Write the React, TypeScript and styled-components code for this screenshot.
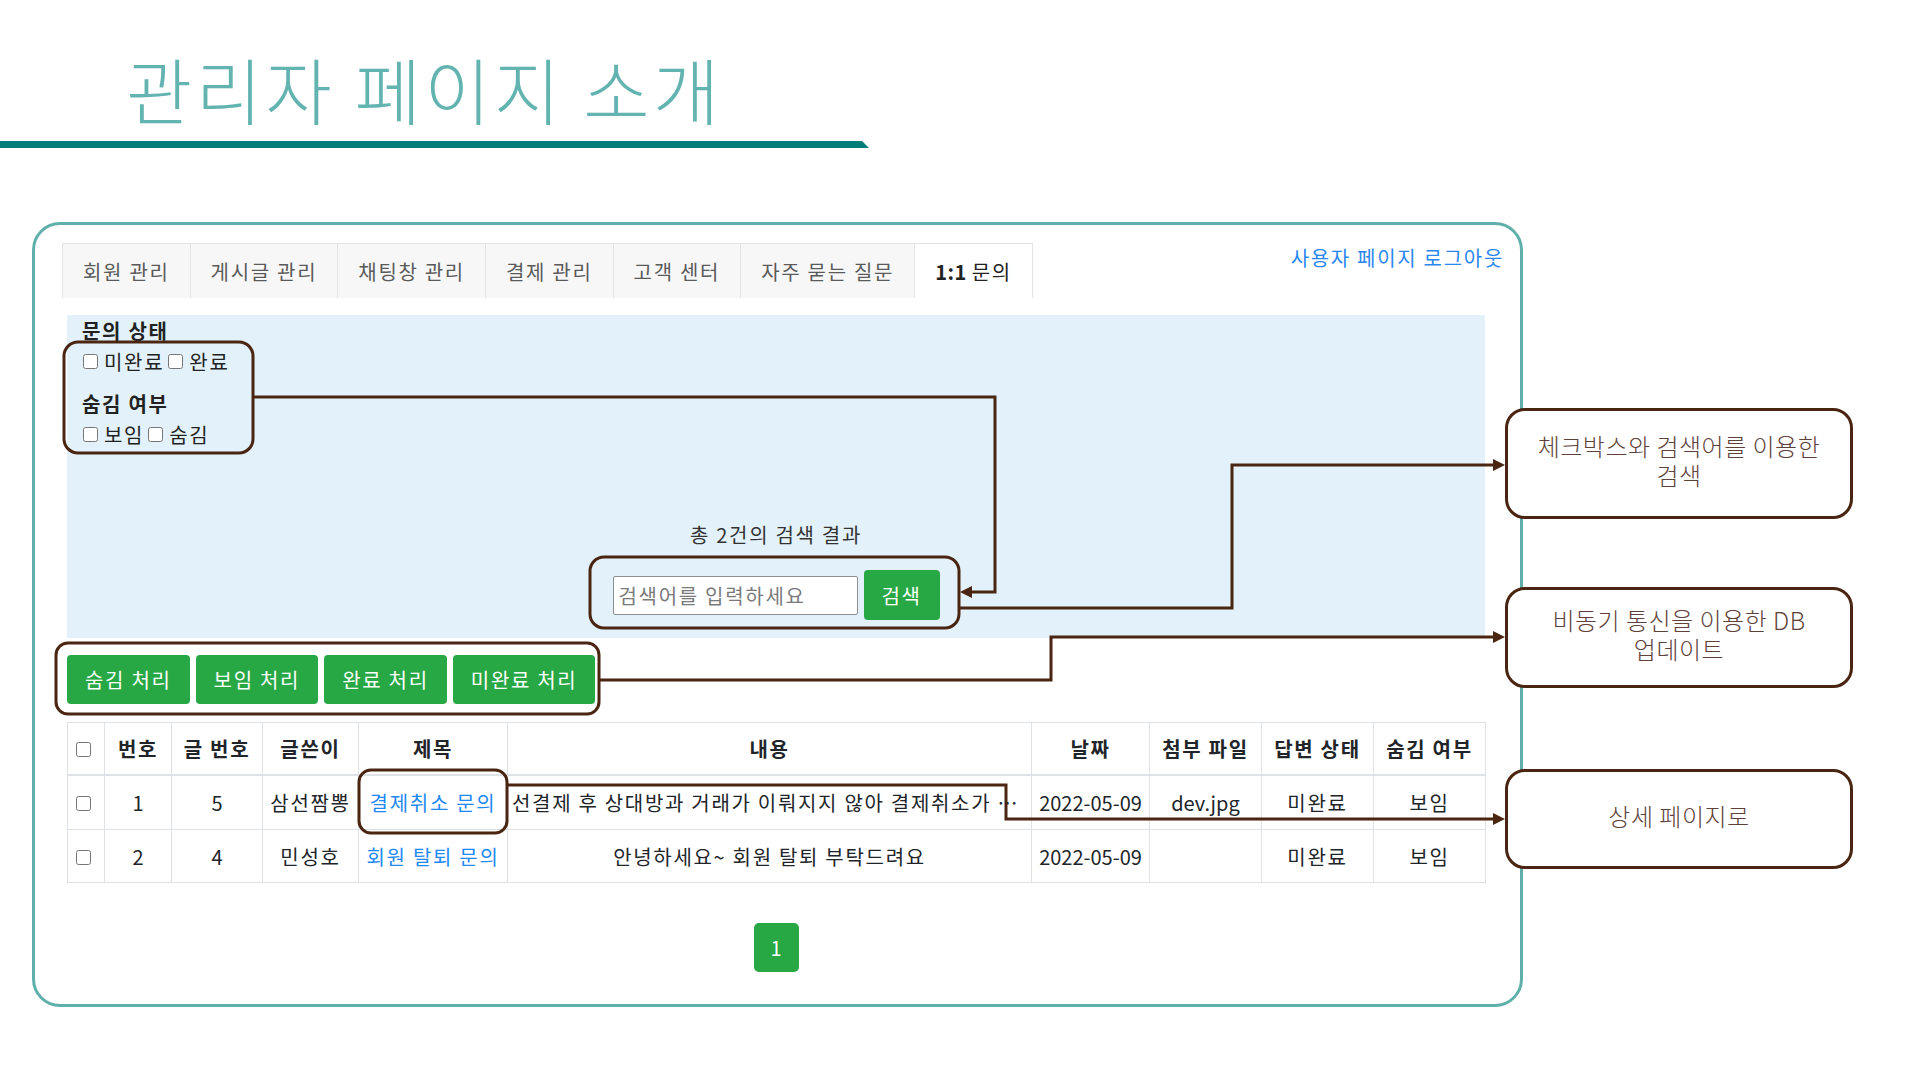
import React from "react";
import styled, { createGlobalStyle } from "styled-components";

const BROWN = "#4a2511";
const GREEN = "#28a745";

const GlobalStyle = createGlobalStyle`
  html, body { margin: 0; padding: 0; background: #fff; }
  body {
    font-family: "Noto Sans CJK KR", "Noto Sans", sans-serif;
    color: #212529;
    letter-spacing: 1.7px;
  }
  * { box-sizing: border-box; }
`;

const Slide = styled.div`
  position: relative;
  width: 1920px;
  height: 1080px;
  overflow: hidden;
  background: #fff;
`;

const Header = styled.header`
  display: flex;
  flex-direction: column;
`;

const Title = styled.h1`
  margin: 0;
  padding: 52px 0 0 126px;
  font-size: 72px;
  line-height: 72px;
  font-weight: 200;
  color: #63b4b0;
  letter-spacing: 3.5px;
`;

const TitleBar = styled.div`
  margin-top: 17px;
  width: 869px;
  height: 7px;
  background: #017e7a;
  clip-path: polygon(0 0, calc(100% - 7px) 0, 100% 100%, 0 100%);
`;

const Card = styled.section`
  margin: 74px 0 0 32px;
  width: 1491px;
  border: 3px solid #5fb0ab;
  border-radius: 28px;
  padding: 18px 35px 32px 32px;
`;

const TopRow = styled.div`
  display: flex;
  justify-content: space-between;
  align-items: flex-start;
  margin: 0 -19px 0 -4px;
`;

const Tabs = styled.nav`
  display: flex;
`;

const Tab = styled.div<{ $active?: boolean }>`
  height: 55px;
  padding: 0 20px;
  display: flex;
  align-items: center;
  font-size: 20px;
  color: ${(p) => (p.$active ? "#222" : "#5a5a5a")};
  background: ${(p) => (p.$active ? "#fff" : "#f7f7f7")};
  border: 1px solid #e4e4e4;
  border-bottom: none;
  margin-left: -1px;
  white-space: nowrap;
  b { font-weight: 700; margin-right: 5px; letter-spacing: 0.5px; }
`;

const LogoutLink = styled.a`
  font-size: 20px;
  line-height: 30px;
  color: #2b87f0;
  text-decoration: none;
`;

const FilterPanel = styled.div`
  margin-top: 17px;
  background: #e3f2fa;
  padding: 1px 15px 18px;
`;

const FilterGroup = styled.div<{ $gap?: number }>`
  margin-top: ${(p) => p.$gap ?? 0}px;
`;

const GroupTitle = styled.div`
  font-size: 20px;
  line-height: 30px;
  font-weight: 700;
  color: #222;
`;

const CheckRow = styled.div`
  display: flex;
  align-items: center;
  height: 30px;
  font-size: 20px;
  color: #222;
`;

const CheckBox = styled.input.attrs({ type: "checkbox" })`
  width: 15px;
  height: 15px;
  margin: 0 6px 0 1px;
`;

const CheckLabel = styled.span`
  margin-right: 3px;
`;

const ResultText = styled.div`
  margin-top: 71px;
  text-align: center;
  font-size: 20px;
  line-height: 30px;
  color: #333;
`;

const SearchRow = styled.div`
  margin-top: 20px;
  display: flex;
  justify-content: center;
  align-items: center;
  gap: 6px;
`;

const SearchInput = styled.input`
  width: 245px;
  height: 39px;
  border: 1px solid #8f8f8f;
  border-radius: 2px;
  padding: 0 5px;
  font-family: inherit;
  letter-spacing: inherit;
  font-size: 20px;
  background: #fff;
  &::placeholder { color: #7a7a7a; }
`;

const GreenButton = styled.button<{ $h: number; $w?: number }>`
  height: ${(p) => p.$h}px;
  ${(p) => (p.$w ? `width: ${p.$w}px;` : "padding: 0 18px;")}
  background: ${GREEN};
  color: #fff;
  border: none;
  border-radius: 4px;
  font-family: inherit;
  letter-spacing: inherit;
  font-size: 20px;
  white-space: nowrap;
`;

const PageButton = styled(GreenButton)`
  letter-spacing: 0;
  border-radius: 5px;
`;

const ActionRow = styled.div`
  margin-top: 17px;
  display: flex;
  gap: 6px;
`;

const Table = styled.table`
  margin-top: 18px;
  width: 100%;
  border-collapse: collapse;
  table-layout: fixed;
  font-size: 20px;
  color: #212529;
`;

const Th = styled.th`
  height: 52px;
  border: 1px solid #dee2e6;
  border-bottom: 2px solid #dee2e6;
  font-weight: 700;
  text-align: center;
  padding: 0 2px;
  white-space: nowrap;
`;

const Td = styled.td<{ $h: number; $plain?: boolean }>`
  height: ${(p) => p.$h}px;
  border: 1px solid #dee2e6;
  text-align: center;
  padding: 0 4px;
  white-space: nowrap;
  overflow: hidden;
  text-overflow: ellipsis;
  ${(p) => (p.$plain ? "letter-spacing: 0;" : "")}
`;

const TitleLink = styled.a`
  color: #1e88f5;
  text-decoration: none;
`;

const Pagination = styled.div`
  margin-top: 40px;
  display: flex;
  justify-content: center;
`;

const Overlay = styled.div`
  position: absolute;
  inset: 0;
  pointer-events: none;
`;

const Callout = styled.div<{ $top: number; $h: number }>`
  position: absolute;
  left: 1505px;
  top: ${(p) => p.$top}px;
  width: 348px;
  height: ${(p) => p.$h}px;
  border: 3px solid ${BROWN};
  border-radius: 20px;
  background: #fff;
  display: flex;
  align-items: center;
  justify-content: center;
  text-align: center;
  padding: 0 16px 7px;
  font-size: 24px;
  line-height: 29px;
  font-weight: 200;
  letter-spacing: 0.5px;
  word-break: keep-all;
  color: #5e4239;
`;

const cols = [37, 67, 91, 96, 149, 524, 118, 112, 112, 112];

const rows = [
  {
    no: 1,
    post: 5,
    writer: "삼선짬뽕",
    title: "결제취소 문의",
    content: "선결제 후 상대방과 거래가 이뤄지지 않아 결제취소가 필요합니다",
    date: "2022-05-09",
    file: "dev.jpg",
    answer: "미완료",
    hidden: "보임",
    h: 55,
  },
  {
    no: 2,
    post: 4,
    writer: "민성호",
    title: "회원 탈퇴 문의",
    content: "안녕하세요~ 회원 탈퇴 부탁드려요",
    date: "2022-05-09",
    file: "",
    answer: "미완료",
    hidden: "보임",
    h: 53,
  },
];

const Connectors = () => (
  <svg width="1920" height="1080" viewBox="0 0 1920 1080" style={{ position: "absolute", left: 0, top: 0 }}>
    <g fill="none" stroke={BROWN} strokeWidth="3">
      <rect x="64" y="342" width="189" height="111" rx="14" />
      <rect x="590" y="557" width="369" height="71" rx="14" />
      <rect x="56" y="643" width="543" height="71" rx="12" />
      <rect x="359" y="770" width="148" height="63" rx="12" />
      <path d="M253 397 H995 V592 H969" />
      <path d="M959 608 H1232 V465 H1496" />
      <path d="M599 680 H1051 V637 H1496" />
      <path d="M507 785 H1006 V819 H1496" />
    </g>
    <g fill={BROWN}>
      <polygon points="972,586 960,592 972,598" />
      <polygon points="1493,459 1505,465 1493,471" />
      <polygon points="1493,631 1505,637 1493,643" />
      <polygon points="1493,813 1505,819 1493,825" />
    </g>
  </svg>
);

export default function App() {
  return (
    <Slide>
      <GlobalStyle />
      <Header>
        <Title>관리자 페이지 소개</Title>
        <TitleBar />
      </Header>
      <Card>
        <TopRow>
          <Tabs>
            <Tab>회원 관리</Tab>
            <Tab>게시글 관리</Tab>
            <Tab>채팅창 관리</Tab>
            <Tab>결제 관리</Tab>
            <Tab>고객 센터</Tab>
            <Tab>자주 묻는 질문</Tab>
            <Tab $active>
              <b>1:1</b>문의
            </Tab>
          </Tabs>
          <LogoutLink href="#">사용자 페이지 로그아웃</LogoutLink>
        </TopRow>
        <FilterPanel>
          <FilterGroup>
            <GroupTitle>문의 상태</GroupTitle>
            <CheckRow>
              <CheckBox />
              <CheckLabel>미완료</CheckLabel>
              <CheckBox />
              <CheckLabel>완료</CheckLabel>
            </CheckRow>
          </FilterGroup>
          <FilterGroup $gap={13}>
            <GroupTitle>숨김 여부</GroupTitle>
            <CheckRow>
              <CheckBox />
              <CheckLabel>보임</CheckLabel>
              <CheckBox />
              <CheckLabel>숨김</CheckLabel>
            </CheckRow>
          </FilterGroup>
          <ResultText>총 2건의 검색 결과</ResultText>
          <SearchRow>
            <SearchInput placeholder="검색어를 입력하세요" />
            <GreenButton $h={50} $w={76}>
              검색
            </GreenButton>
          </SearchRow>
        </FilterPanel>
        <ActionRow>
          <GreenButton $h={49}>숨김 처리</GreenButton>
          <GreenButton $h={49}>보임 처리</GreenButton>
          <GreenButton $h={49}>완료 처리</GreenButton>
          <GreenButton $h={49}>미완료 처리</GreenButton>
        </ActionRow>
        <Table>
          <colgroup>
            {cols.map((w, i) => (
              <col key={i} style={{ width: w }} />
            ))}
          </colgroup>
          <thead>
            <tr>
              <Th>
                <CheckBox />
              </Th>
              <Th>번호</Th>
              <Th>글 번호</Th>
              <Th>글쓴이</Th>
              <Th>제목</Th>
              <Th>내용</Th>
              <Th>날짜</Th>
              <Th>첨부 파일</Th>
              <Th>답변 상태</Th>
              <Th>숨김 여부</Th>
            </tr>
          </thead>
          <tbody>
            {rows.map((r) => (
              <tr key={r.no}>
                <Td $h={r.h}>
                  <CheckBox />
                </Td>
                <Td $h={r.h} $plain>{r.no}</Td>
                <Td $h={r.h} $plain>{r.post}</Td>
                <Td $h={r.h}>{r.writer}</Td>
                <Td $h={r.h}>
                  <TitleLink href="#">{r.title}</TitleLink>
                </Td>
                <Td $h={r.h}>{r.content}</Td>
                <Td $h={r.h} $plain>{r.date}</Td>
                <Td $h={r.h} $plain>{r.file}</Td>
                <Td $h={r.h}>{r.answer}</Td>
                <Td $h={r.h}>{r.hidden}</Td>
              </tr>
            ))}
          </tbody>
        </Table>
        <Pagination>
          <PageButton $h={49} $w={45}>
            1
          </PageButton>
        </Pagination>
      </Card>
      <Overlay>
        <Connectors />
        <Callout $top={408} $h={111}>
          체크박스와 검색어를 이용한 검색
        </Callout>
        <Callout $top={587} $h={101}>
          비동기 통신을 이용한 DB 업데이트
        </Callout>
        <Callout $top={769} $h={100}>
          상세 페이지로
        </Callout>
      </Overlay>
    </Slide>
  );
}
